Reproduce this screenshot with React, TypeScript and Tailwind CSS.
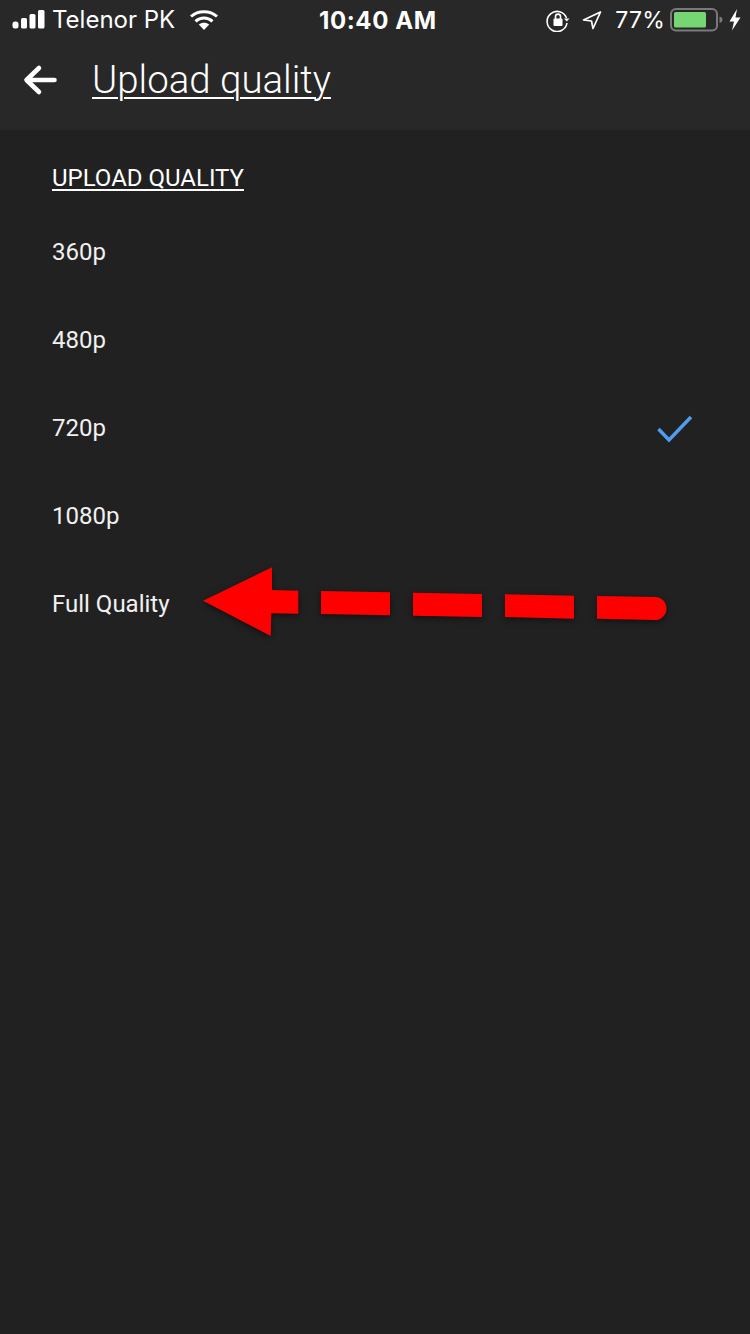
export default function App() {
  const rows = ["360p", "480p", "720p", "1080p", "Full Quality"];
  return (
    <div className="relative w-[750px] h-[1334px] overflow-hidden bg-[#212121] text-white font-['Roboto',sans-serif]">
      <header className="h-[130px] bg-[#282828]">
        <div className="relative h-10 flex items-center justify-between pl-3 pr-[9px] font-['Inter',sans-serif]">
          <div className="flex items-center">
            <svg width="36" height="22" viewBox="0 0 36 22" fill="#fff">
              <rect x="0.500" y="12.500" width="6" height="7" rx="2.500" />
              <rect x="9" y="9" width="6" height="10.500" rx="1.500" />
              <rect x="17.500" y="5" width="6" height="14.500" rx="1.500" />
              <rect x="26" y="1" width="6.500" height="18.500" rx="1.500" />
            </svg>
            <span className="ml-[4px] text-[24px] leading-none">Telenor PK</span>
            <svg className="ml-[14px]" width="30" height="22" viewBox="0 0 30 22" fill="none" stroke="#fff" strokeWidth="3">
              <path d="M2 7.500C9 1 21 1 28 7.500" />
              <path d="M6.500 12.300C11.500 8 18.500 8 23.500 12.300" />
              <path d="M15 21L9.800 15.500C12.800 13.200 17.200 13.200 20.200 15.500Z" fill="#fff" stroke="none" />
            </svg>
          </div>
          <span className="absolute left-[319px] top-[8px] text-[24px] leading-[26px] font-bold tracking-[0.6px]">10:40 AM</span>
          <div className="flex items-center">
            <svg width="24" height="24" viewBox="0 0 24 24" fill="none" stroke="#fff" strokeWidth="1.600">
              <path d="M20.500 10A10 10 0 1 0 21 15" />
              <path d="M18 10.500h5.500l-2.700 3z" fill="#fff" stroke="none" />
              <rect x="7.500" y="10.500" width="9" height="7.500" rx="1" fill="#fff" stroke="none" />
              <path d="M9.500 11V8.600a2.500 2.500 0 0 1 5 0V11" />
            </svg>
            <svg className="ml-[12px]" width="20" height="20" viewBox="0 0 20 20" fill="none" stroke="#fff" strokeWidth="1.700" strokeLinejoin="round">
              <path d="M18.500 2L1.500 10L9.500 11L11 18.500Z" />
            </svg>
            <span className="ml-[13px] text-[23px] leading-none tracking-[0.2px]">77%</span>
            <svg className="ml-[5px]" width="53" height="24" viewBox="0 0 53 24" fill="none">
              <rect x="1" y="1" width="46" height="21.500" rx="5" stroke="#7a7a7a" strokeWidth="2" />
              <rect x="4" y="4" width="32" height="15.500" rx="1.500" fill="#76d672" />
              <path d="M49.500 8.500c2 .6 3 1.600 3 3.200s-1 2.700-3 3.300z" fill="#7a7a7a" />
            </svg>
            <svg className="ml-[6px]" width="12" height="22" viewBox="0 0 12 22" fill="#fff">
              <path d="M8 0L0.500 12.500H5L3 21.500L11.500 8.500H6.500Z" />
            </svg>
          </div>
        </div>
        <div className="flex items-center h-[80px] pl-[23px]">
          <svg width="34" height="34" viewBox="0 0 34 34" fill="none" stroke="#fff" strokeWidth="4.600" strokeLinecap="round" strokeLinejoin="round">
            <path d="M31.500 17H4M16 5L3.500 17L16 29" />
          </svg>
          <h1 className="ml-[35px] text-[38.400px] leading-[42px] font-light underline underline-offset-[4px] decoration-[2px]">Upload quality</h1>
        </div>
      </header>
      <main className="pl-[52px] pr-[57px]">
        <h2 className="pt-[34px] pb-[16px] text-[24px] leading-[28px] font-normal underline underline-offset-[3px] decoration-[2px]">UPLOAD QUALITY</h2>
        {rows.map((r) => (
          <div key={r} className="flex items-center justify-between h-[88px] text-[24px] text-[#f1f1f1]">
            <span>{r}</span>
            {r === "720p" && (
              <svg className="mt-[2px]" width="36" height="28" viewBox="0 0 36 28" fill="none" stroke="#4f9cf0" strokeWidth="3.500">
                <path d="M1.500 14L12 25L34 2" />
              </svg>
            )}
          </div>
        ))}
      </main>
      <svg className="absolute left-0 top-0 pointer-events-none drop-shadow-[0_2px_3px_rgba(0,0,0,0.5)]" width="750" height="1334" viewBox="0 0 750 1334" fill="#ff0000">
        <path d="M203 600.700L272 567.300L272 590L298.300 590.700L298.300 613.700L271.300 613.300L270.700 636Z" />
        <path d="M321 591L390 592.300L390 615.300L321 614Z" />
        <path d="M413 592.700L482 594L482 617L413 615.700Z" />
        <path d="M505 594.300L574 595.700L574 618.700L505 617Z" />
        <path d="M597 596L655 597A11.500 11.500 0 0 1 655 620L597 618.700Z" />
      </svg>
    </div>
  );
}
